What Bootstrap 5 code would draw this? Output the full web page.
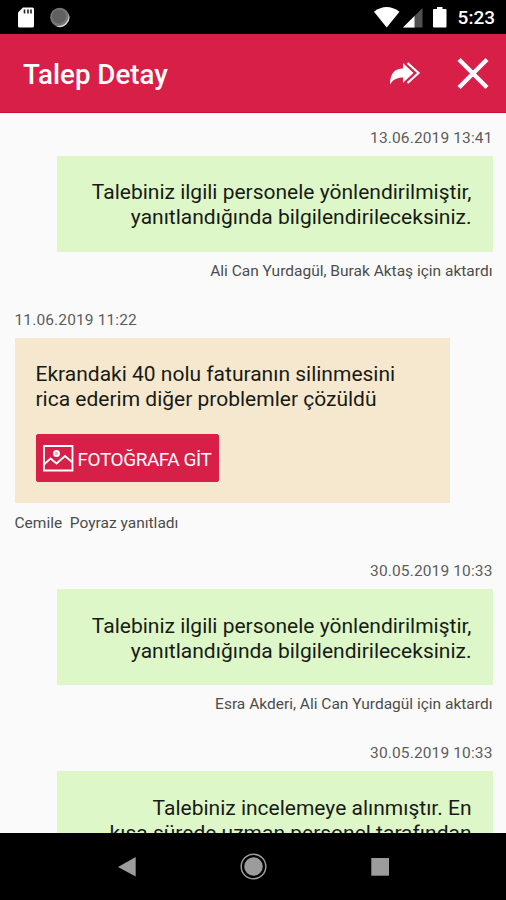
<!DOCTYPE html>
<html lang="tr">
<head>
<meta charset="utf-8">
<meta name="viewport" content="width=device-width, initial-scale=1">
<title>Talep Detay</title>
<link href="https://cdn.jsdelivr.net/npm/bootstrap@5.3.0/dist/css/bootstrap.min.css" rel="stylesheet">
<style>
  body { font-family: Roboto, "Liberation Sans", sans-serif; background: #fafafa; color: #171a15; }
  .status-strip { height: 34px; padding: 0 11px 0 17px; }
  .clock { font-size: 19px; font-weight: 500; line-height: 34px; padding-top: 2px; }
  .app-header { height: 79px; background: #d81f47; border-bottom: 1px solid #c8102e; padding: 0 17px 0 23px; }
  .app-title { font-size: 27.7px; font-weight: 500; line-height: 32px; padding-top: 3px; }
  .thread { padding: 16px 13.5px 0 14.5px; }
  .entry { margin-bottom: 30.7px; }
  .stamp, .byline { font-size: 15.5px; line-height: 18px; color: #5c5c5c; white-space: pre; }
  .stamp { letter-spacing: .13px; }
  .byline { color: #4c4c4c; }
  .bubble { width: 435.5px; margin: 8.7px 0 10.6px; padding: 24.7px 21px 21.3px; font-size: 21px; line-height: 25px; }
  .bubble-out { background: #def7c8; }
  .bubble-in { background: #f6e8cf; }
  .btn-photo { --bs-btn-color: #fff; --bs-btn-bg: #d81f47; --bs-btn-border-color: #d81f47; --bs-btn-hover-color: #fff; --bs-btn-hover-bg: #bd183b;
    --bs-btn-padding-x: 5px; --bs-btn-padding-y: 0; --bs-btn-border-radius: 2px; --bs-btn-font-size: 19px;
    width: 183px; height: 48px; margin-top: 22px; margin-bottom: -.7px; gap: 4px; letter-spacing: -.45px; }
  .btn-label { padding-top: 3px; }
  .nav-strip { height: 67px; }
</style>
</head>
<body class="vh-100 overflow-hidden d-flex flex-column">
<div class="status-strip bg-black text-white d-flex align-items-center flex-shrink-0">
  <svg width="54" height="34" viewBox="0 0 54 34" aria-hidden="true">
    <path d="M6 7.5h9.500q1.500 0 1.500 1.500v17q0 1.500-1.500 1.500H2.500Q1 27.500 1 26V12.500z" fill="#fff"/>
    <path d="M7.500 9.500v4M11 9.500v4M14 9.500v4" stroke="#222" stroke-width="1.600"/>
    <circle cx="42.700" cy="17.300" r="9.500" fill="#777"/>
    <path d="M51.500 13.500A9.500 9.500 0 0 1 38 25.600A10.500 10.500 0 0 0 51.500 13.500z" fill="#ddd"/>
    <circle cx="42" cy="16.500" r="7" fill="#606060"/>
  </svg>
  <svg class="ms-auto" width="76" height="34" viewBox="0 0 76 34" aria-hidden="true">
    <path d="M0 11.700Q12.500 2.500 25.500 11.700L12.700 27.500z" fill="#fff"/>
    <path d="M48.500 8v19.500H29z" fill="#505050"/>
    <path d="M40.500 16v11.500H29z" fill="#fff"/>
    <path d="M63 7h5.500v2h3q1 0 1 1v16.500q0 1-1 1H60q-1 0-1-1V10q0-1 1-1h3z" fill="#fff"/>
  </svg>
  <span class="clock ms-2">5:23</span>
</div>
<header class="app-header text-white d-flex align-items-center flex-shrink-0">
  <h1 class="app-title mb-0 me-auto">Talep Detay</h1>
  <svg width="32" height="26" viewBox="0 0 32 26" aria-label="Aktar" role="img">
    <path d="M1 24.500C1 13 6 8.500 14 8.500V3L24.500 13L14 22.700V17.500C8 17.500 4 19.500 1 24.500z" fill="#fff"/>
    <path d="M18.500 3L29.500 13L18.500 23" fill="none" stroke="#fff" stroke-width="2.200"/>
  </svg>
  <svg class="ms-4" width="44" height="32" viewBox="0 0 44 32" aria-label="Kapat" role="img">
    <path d="M14 2.500L42 30.500M42 2.500L14 30.500" stroke="#fff" stroke-width="4.300"/>
  </svg>
</header>
<main class="thread flex-grow-1 overflow-hidden">
  <article class="entry d-flex flex-column align-items-end text-end">
    <div class="stamp">13.06.2019 13:41</div>
    <div class="bubble bubble-out">Talebiniz ilgili personele yönlendirilmiştir,<br>yanıtlandığında bilgilendirileceksiniz.</div>
    <div class="byline">Ali Can Yurdagül, Burak Aktaş için aktardı</div>
  </article>
  <article class="entry d-flex flex-column align-items-start">
    <div class="stamp">11.06.2019 11:22</div>
    <div class="bubble bubble-in">Ekrandaki 40 nolu faturanın silinmesini<br>rica ederim diğer problemler çözüldü
      <button type="button" class="btn btn-photo d-flex align-items-center text-nowrap">
        <svg class="flex-shrink-0" width="32" height="28" viewBox="0 0 32 28" fill="none" stroke="#fff" stroke-width="1.800" aria-hidden="true">
          <path d="M2 2h28.500v24.500H2z"/>
          <path d="M2 20.500L8.500 14.500L14.500 19.500L23 12L30.500 18.500"/>
          <circle cx="14.500" cy="9.500" r="2.600" fill="#fff" fill-opacity=".65"/>
        </svg>
        <span class="btn-label">FOTOĞRAFA GİT</span>
      </button>
    </div>
    <div class="byline">Cemile  Poyraz yanıtladı</div>
  </article>
  <article class="entry d-flex flex-column align-items-end text-end">
    <div class="stamp">30.05.2019 10:33</div>
    <div class="bubble bubble-out">Talebiniz ilgili personele yönlendirilmiştir,<br>yanıtlandığında bilgilendirileceksiniz.</div>
    <div class="byline">Esra Akderi, Ali Can Yurdagül için aktardı</div>
  </article>
  <article class="entry d-flex flex-column align-items-end text-end">
    <div class="stamp">30.05.2019 10:33</div>
    <div class="bubble bubble-out">Talebiniz incelemeye alınmıştır. En<br>kısa sürede uzman personel tarafından</div>
  </article>
</main>
<nav class="nav-strip bg-black flex-shrink-0" aria-label="Sistem">
  <svg class="w-100 d-block" height="67" viewBox="0 0 506 67" fill="#9c9c9c">
    <path d="M118 34L135.700 24V43.500z"/>
    <circle cx="253.500" cy="33.500" r="9.300"/>
    <circle cx="253.500" cy="33.500" r="12.300" fill="none" stroke="#9c9c9c" stroke-width="1.500"/>
    <path d="M371.300 25h17.700v17.700h-17.700z"/>
  </svg>
</nav>
<script src="https://cdn.jsdelivr.net/npm/bootstrap@5.3.0/dist/js/bootstrap.bundle.min.js"></script>
</body>
</html>
